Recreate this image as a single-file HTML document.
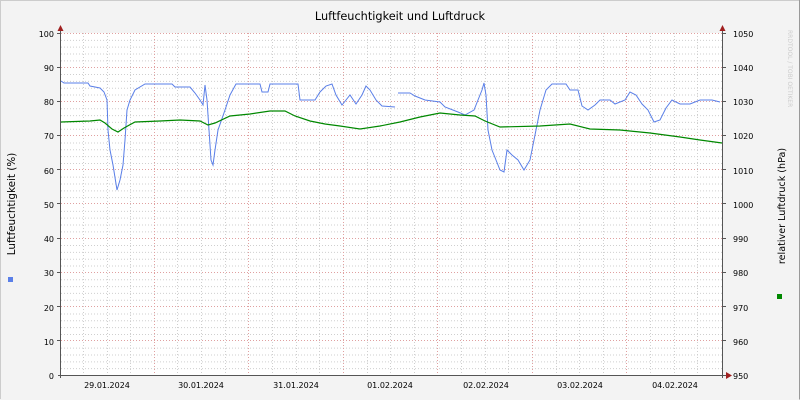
<!DOCTYPE html>
<html><head><style>body{margin:0;background:#f3f3f3}svg{display:block}text{font-family:"DejaVu Sans","Liberation Sans",sans-serif;font-size:8px;fill:#000}</style></head><body>
<svg width="800" height="400" xmlns="http://www.w3.org/2000/svg">
<rect width="800" height="400" fill="#f3f3f3"/>
<path d="M0 0.5H799.5V399.5" fill="none" stroke="#999"/>
<path d="M0.5 399V0.5H799" fill="none" stroke="#ccc"/>
<rect x="61" y="33" width="661" height="342" fill="#fff"/>
<g id="grid" stroke-dasharray="1,2" stroke-width="1">
<g stroke="#cfcfcf">
<path d="M61 368.66H722M61 361.82H722M61 354.98H722M61 348.14H722M61 334.46H722M61 327.62H722M61 320.78H722M61 313.94H722M61 300.26H722M61 293.42H722M61 286.58H722M61 279.74H722M61 266.06H722M61 259.22H722M61 252.38H722M61 245.54H722M61 231.86H722M61 225.02H722M61 218.18H722M61 211.34H722M61 197.66H722M61 190.82H722M61 183.98H722M61 177.14H722M61 163.46H722M61 156.62H722M61 149.78H722M61 142.94H722M61 129.26H722M61 122.42H722M61 115.58H722M61 108.74H722M61 95.06H722M61 88.22H722M61 81.38H722M61 74.54H722M61 60.86H722M61 54.02H722M61 47.18H722M61 40.34H722"/>
<path d="M83.5 33V375M107.5 33V375M130.5 33V375M177.5 33V375M201.5 33V375M225.5 33V375M272.5 33V375M296.5 33V375M319.5 33V375M367.5 33V375M390.5 33V375M414.5 33V375M461.5 33V375M485.5 33V375M508.5 33V375M556.5 33V375M579.5 33V375M603.5 33V375M650.5 33V375M674.5 33V375M697.5 33V375"/>
</g>
<g stroke="#e0a0a0">
<path d="M61 340.5H722M61 306.5H722M61 272.5H722M61 238.5H722M61 203.5H722M61 169.5H722M61 135.5H722M61 101.5H722M61 67.5H722M61 33.5H722"/>
<path d="M154.5 33V375M248.5 33V375M343.5 33V375M437.5 33V375M532.5 33V375M626.5 33V375"/>
</g>
</g>
<g stroke="#555" fill="none">
<path d="M60.5 30V378M722.5 30V378M58 375.5H726"/>
<path d="M57 340.5H61M57 306.5H61M57 272.5H61M57 238.5H61M57 203.5H61M57 169.5H61M57 135.5H61M57 101.5H61M57 67.5H61M57 33.5H61M722 340.5H726M722 306.5H726M722 272.5H726M722 238.5H726M722 203.5H726M722 169.5H726M722 135.5H726M722 101.5H726M722 67.5H726M722 33.5H726"/>
</g>
<g fill="#a02020"><path d="M57.5 31L60.5 25L63.5 31Z"/><path d="M719.5 31L722.5 25L725.5 31Z"/><path d="M726 372L732 375.5L726 379Z"/></g>
<polyline fill="none" stroke="#5a7fe8" stroke-width="1" points="61,81 64,83 88,83 90,86 100,88 104,92 107,100 108,130 110,150 113,165 117,190 120,180 123,165 125,140 127,110 130,100 135,90 145,84 172,84 175,87 190,87 195,93 200,100 203,105 205,85 207,100 209,130 211,160 213,165 215,150 218,130 225,110 230,95 236,84 260,84 262,92 268,92 270,84 298,84 300,100 315,100 320,92 326,86 332,84 336,95 342,105 346,100 350,95 356,104 362,95 366,86 370,90 376,100 382,106 395,107"/>
<polyline fill="none" stroke="#5a7fe8" stroke-width="1" points="398,93 410,93 415,96 425,100 440,102 445,107 458,112 465,115 474,110 478,100 482,90 484,83 486,95 488,130 492,150 496,160 500,170 504,172 507,150 512,155 518,160 524,170 530,160 536,130 540,110 546,90 552,84 566,84 570,90 578,90 582,106 588,110 595,105 600,100 610,100 615,104 625,100 630,92 636,95 642,104 648,110 654,122 660,120 666,108 672,100 680,104 690,104 700,100 712,100 720,102"/>
<polyline fill="none" stroke="#008800" stroke-width="1.2" points="61,122 90,121 100,120 105,123 112,129 118,132 124,128 135,122 160,121 180,120 200,121 208,125 215,123 230,116 250,114 270,111 285,111 295,116 310,121 325,124 340,126 360,129 380,126 400,122 420,117 440,113 460,115 475,116 485,121 500,127 540,126 570,124 590,129 620,130 650,133 680,137 700,140 722,143"/>
<text x="400" y="20" text-anchor="middle" style="font-size:11.3px">Luftfeuchtigkeit und Luftdruck</text>
<g text-anchor="end"><text x="54" y="379">0</text><text x="54" y="345">10</text><text x="54" y="311">20</text><text x="54" y="276">30</text><text x="54" y="242">40</text><text x="54" y="208">50</text><text x="54" y="174">60</text><text x="54" y="139">70</text><text x="54" y="105">80</text><text x="54" y="71">90</text><text x="54" y="37">100</text></g>
<g><text x="733" y="379">950</text><text x="733" y="345">960</text><text x="733" y="311">970</text><text x="733" y="276">980</text><text x="733" y="242">990</text><text x="733" y="208">1000</text><text x="733" y="174">1010</text><text x="733" y="139">1020</text><text x="733" y="105">1030</text><text x="733" y="71">1040</text><text x="733" y="37">1050</text></g>
<g text-anchor="middle"><text x="107" y="388">29.01.2024</text><text x="201" y="388">30.01.2024</text><text x="296" y="388">31.01.2024</text><text x="390" y="388">01.02.2024</text><text x="486" y="388">02.02.2024</text><text x="580" y="388">03.02.2024</text><text x="675" y="388">04.02.2024</text></g>
<text transform="translate(15,204) rotate(-90)" text-anchor="middle" style="font-size:10.4px">Luftfeuchtigkeit (%)</text>
<text transform="translate(785,206) rotate(-90)" text-anchor="middle" style="font-size:9.6px">relativer Luftdruck (hPa)</text>
<text transform="translate(788,30) rotate(90)" style="font-size:6px;fill:#ccc">RRDTOOL / TOBI OETIKER</text>
<rect x="8" y="277" width="5" height="5" fill="#5a7fe8"/>
<rect x="777" y="294" width="5" height="5" fill="#008800"/>
</svg>
</body></html>
